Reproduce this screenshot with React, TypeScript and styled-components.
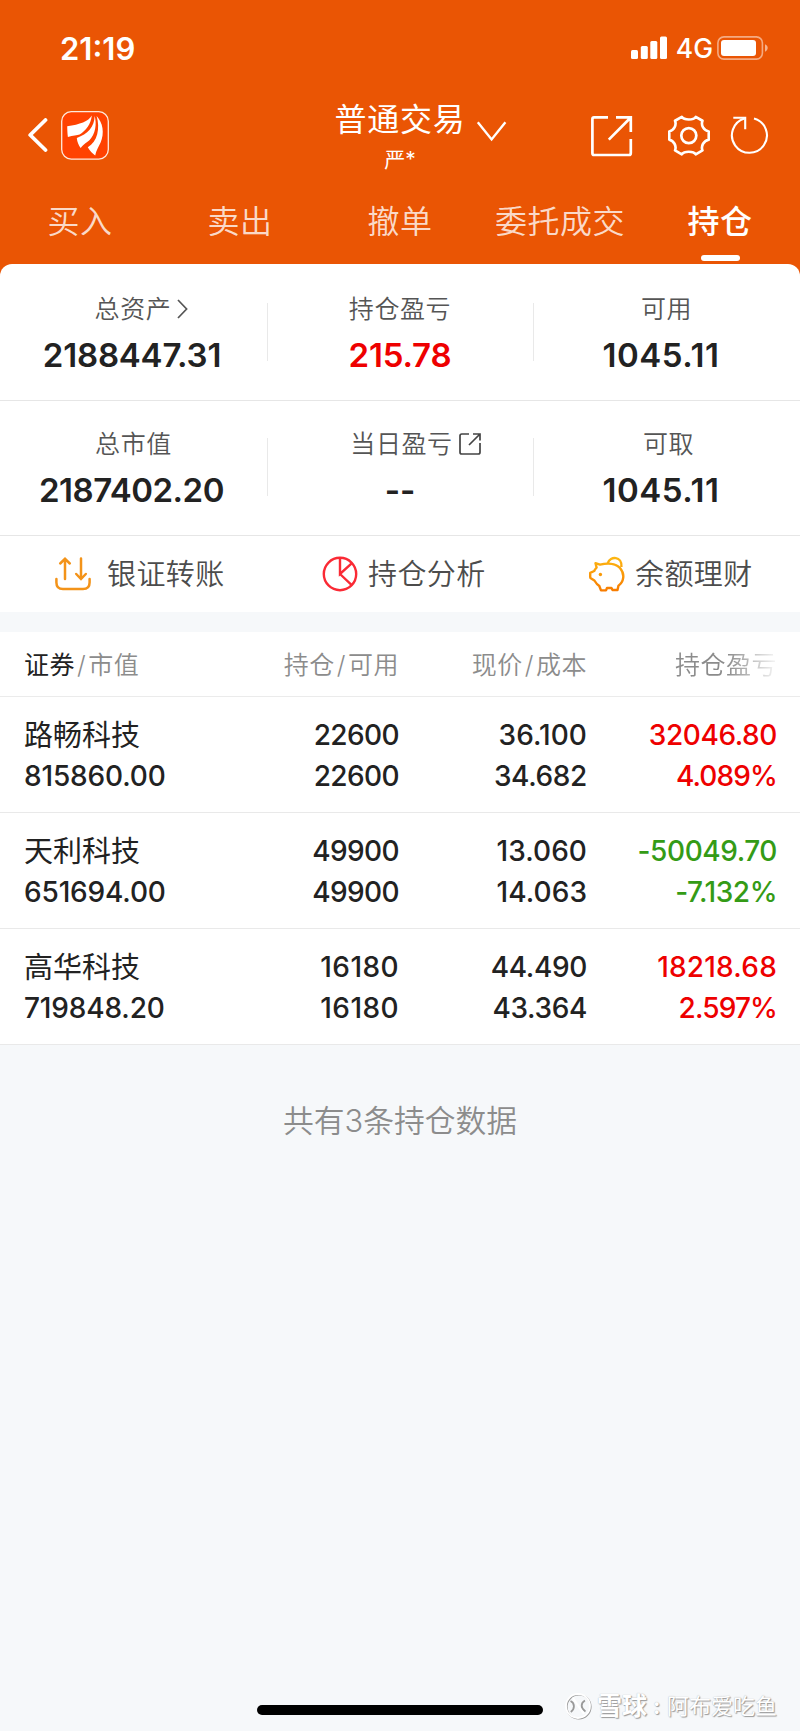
import React from "react";
import styled, { createGlobalStyle } from "styled-components";

const Global = createGlobalStyle`
  * { box-sizing: border-box; }
  body {
    margin: 0;
    background: #f6f8fa;
    font-family: Inter, "Noto Sans CJK SC", sans-serif;
    color: #222;
  }
`;

const Screen = styled.main`
  position: relative;
  width: 800px;
  height: 1731px;
  overflow: hidden;
  background: #f6f8fa;
`;

const Header = styled.header`
  height: 276px;
  background: #ea5504;
  color: #fff;
`;

const StatusBar = styled.div`
  display: flex;
  align-items: center;
  height: 96px;
  padding: 0 31px 0 60px;
`;

const Clock = styled.div`
  flex: 1;
  font-size: 31px;
  font-weight: 600;
  line-height: 40px;
  padding-top: 2px;
`;

const Network = styled.div`
  margin: 0 4px 0 8px;
  font-size: 26.5px;
  font-weight: 500;
  line-height: 40px;
`;

const NavBar = styled.div`
  display: grid;
  grid-template-columns: 300px 230px 270px;
  height: 84px;
`;

const NavLeft = styled.div`
  display: flex;
  align-items: center;
  gap: 13px;
  padding: 0 0 6px 28px;
`;

const NavTitle = styled.div`
  display: flex;
  padding-left: 34px;
`;

const TitleText = styled.div`
  width: 132px;
  text-align: center;
  white-space: nowrap;
  font-size: 32px;
  line-height: 40px;
  letter-spacing: 0.8px;
  padding-top: 4px;
`;

const Account = styled.div`
  font-size: 21px;
  line-height: 28px;
  letter-spacing: 0;
  padding-top: 6px;
`;

const NavRight = styled.div`
  display: flex;
  align-items: flex-start;
  padding: 19px 0 0 60px;
`;

const TitleChevron = styled.svg`
  flex: none;
  margin: 25px 0 0 10px;
`;

const Tabs = styled.nav`
  display: grid;
  grid-template-columns: repeat(5, 160px);
  height: 84px;
`;

const Tab = styled.div<{ $active?: boolean }>`
  display: flex;
  flex-direction: column;
  align-items: center;
  padding-top: 19px;
  font-size: 32px;
  line-height: 46px;
  letter-spacing: 0.5px;
  font-weight: ${(p) => (p.$active ? 500 : 350)};
  color: ${(p) => (p.$active ? "#fff" : "rgba(255,255,255,.8)")};

  &::after {
    content: "";
    display: ${(p) => (p.$active ? "block" : "none")};
    width: 39px;
    height: 6px;
    margin-top: 10px;
    border-radius: 3px;
    background: #fff;
  }
`;

const Summary = styled.section`
  margin-top: -12px;
  border-radius: 12px 12px 0 0;
  background: #fff;
`;

const SummaryRow = styled.div`
  display: grid;
  grid-template-columns: 267px 266px 267px;
  height: 135px;
  padding: 25px 0;
  border-bottom: 1px solid #e6e6e6;

  &:first-child {
    height: 137px;
    padding-top: 27px;
  }
`;

const Metric = styled.div`
  display: flex;
  flex-direction: column;
  align-items: center;
  height: 84px;
  padding-top: 1px;

  & + & {
    background: linear-gradient(#e9e9e9, #e9e9e9) 0 12px / 1px 58px no-repeat;
  }
`;

const MetricLabel = styled.div<{ $shift?: number }>`
  display: flex;
  align-items: center;
  gap: 6px;
  margin-left: ${(p) => p.$shift ?? 0}px;
  font-size: 25px;
  font-weight: 350;
  line-height: 34px;
  letter-spacing: 0.6px;
  color: #555;
`;

const MetricValue = styled.div<{ $color?: string; $shift?: number; $track?: number }>`
  margin: 9px 0 0 ${(p) => p.$shift ?? 0}px;
  font-size: 33px;
  font-weight: 600;
  line-height: 40px;
  letter-spacing: ${(p) => p.$track ?? 0}em;
  color: ${(p) => p.$color ?? "#222"};
`;

const Actions = styled.section`
  display: grid;
  grid-template-columns: 267px 267px 266px;
  height: 76px;
  background: #fff;
`;

const Action = styled.div<{ $gap: number }>`
  display: flex;
  align-items: center;
  gap: ${(p) => p.$gap}px;
  padding-left: 55px;
  font-size: 29px;
  font-weight: 350;
  line-height: 40px;
  letter-spacing: 0.4px;
  color: #4c4c4c;
  white-space: nowrap;

  span {
    padding-top: 2px;
  }
`;

const Table = styled.section`
  margin-top: 20px;
  background: #fff;
`;

const HeadRow = styled.div`
  display: grid;
  grid-template-columns: 200px 175px 188px 190px;
  height: 65px;
  padding: 0 23px 0 24px;
  border-bottom: 1px solid #ebebeb;
  font-size: 25px;
  font-weight: 350;
  line-height: 66px;
  letter-spacing: 0.5px;
  color: #8c8c8c;
`;

const HeadCell = styled.div<{ $right?: boolean; $fade?: boolean }>`
  height: 64px;
  text-align: ${(p) => (p.$right ? "right" : "left")};
  ${(p) =>
    p.$fade &&
    "mask-image: linear-gradient(90deg, #000 140px, transparent 194px);"}

  b {
    font-weight: 400;
    color: #222;
  }
  i {
    font-style: normal;
    margin: 0 2px;
  }
`;

const Row = styled.div`
  display: grid;
  grid-template-columns: 200px 175px 188px 190px;
  height: 116px;
  padding: 18px 23px 0 24px;
  border-bottom: 1px solid #e9e9e9;
`;

const Cell = styled.div<{ $right?: boolean; $color?: string }>`
  text-align: ${(p) => (p.$right ? "right" : "left")};
  color: ${(p) => p.$color ?? "#222"};
  white-space: nowrap;
`;

const Figure = styled.div<{ $track: number }>`
  font-size: 28px;
  font-weight: 500;
  line-height: 40.5px;
  letter-spacing: ${(p) => p.$track}em;
`;

const Name = styled.div`
  height: 40.5px;
  padding-top: 1px;
  font-size: 29px;
  font-weight: 400;
  line-height: 40px;
`;

const Footnote = styled.p`
  margin: 56px 0 0;
  text-align: center;
  font-size: 30.8px;
  font-weight: 350;
  line-height: 40px;
  color: #8c8c8c;
`;

const HomeIndicator = styled.div`
  position: absolute;
  left: 257px;
  bottom: 16px;
  width: 286px;
  height: 10px;
  border-radius: 5px;
  background: #000;
`;

const Watermark = styled.div`
  position: absolute;
  right: 23px;
  bottom: 8px;
  display: flex;
  align-items: center;
  font-size: 22px;
  line-height: 34px;
  color: #fff;
  text-shadow: 1px 1px 1px #999, 0 0 1px #aaa;
  white-space: nowrap;

  strong {
    margin: 0 3px 0 5px;
    font-size: 25px;
    font-weight: 700;
  }
  em {
    font-style: normal;
    font-weight: 700;
    width: 17px;
    padding-left: 3px;
  }
`;

const RED = "#ee0000";
const GREEN = "#349b16";

/* Average tracking for a figure: narrow glyphs (1 and the point) get more room. */
const tracking = (text: string, base: number) => {
  const ones = text.split("1").length - 1;
  const points = text.split(".").length - 1;
  const percents = text.split("%").length - 1;
  const extra = ones * 0.09 + points * 0.05 - percents * 0.11;
  return base + extra / text.length;
};

const Signal = () => (
  <svg width="37" height="24" viewBox="0 0 37 24" fill="#fff">
    <rect x="0" y="14" width="7" height="9" rx="1.5" />
    <rect x="9.8" y="10" width="7" height="13" rx="1.5" />
    <rect x="19.3" y="5" width="7" height="18" rx="1.5" />
    <rect x="29" y="0.5" width="7" height="22.5" rx="1.5" />
  </svg>
);

const Battery = () => (
  <svg width="52" height="24" viewBox="0 0 52 24">
    <rect x="0.9" y="0.9" width="44.5" height="22.2" rx="6" fill="none" stroke="#fff" strokeOpacity=".5" strokeWidth="1.6" />
    <rect x="4" y="4" width="35" height="16" rx="3" fill="#fff" />
    <path d="M48 8.3c3.6 1.4 3.6 6 0 7.4z" fill="#fff" fillOpacity=".55" />
  </svg>
);

const BackIcon = () => (
  <svg width="20" height="34" viewBox="0 0 20 34" fill="none" stroke="#fff" strokeWidth="3.8" strokeLinecap="round" strokeLinejoin="round">
    <path d="M17.5 2L2.2 17L17.5 32" />
  </svg>
);

const BrandIcon = () => (
  <svg width="48" height="49" viewBox="0 0 48 49">
    <rect x="0.7" y="0.7" width="46.6" height="47.4" rx="9.5" fill="#ff4200" stroke="#ffe9dd" strokeWidth="1.3" />
    <g fill="#fff">
      <path d="M30.8 4.6C27.5 10.5 19 13.6 6.2 15.3C6.3 19 6.4 23 6.9 26C12 24.8 16.2 24.2 18.6 23.6C25 19.8 30 13 30.8 4.6Z" />
      <path d="M33.6 5C33.5 16 26.5 23 15.8 27C16.2 31 17.7 34.4 19.7 37C23 32.5 26 31.3 28.4 29.2C34.5 23 36 13 33.6 5Z" />
      <path d="M35.6 5C39.3 17.5 36.5 30.5 26.8 36.3C28.8 39.8 31.4 42.6 34.2 44.4C35 39.5 37.8 35.6 39.6 31.5C43.6 22.3 42 11.6 35.6 5Z" />
    </g>
  </svg>
);

const ShareIcon = () => (
  <svg width="43" height="43" viewBox="0 0 43 43" fill="none" stroke="#fff" strokeWidth="2.7">
    <path d="M18 2.4H4Q2.4 2.4 2.4 4V38Q2.4 40 4 40H39Q40.8 40 40.8 38V24" />
    <path d="M26 2.4H40.8V17M40 3.2L18.8 24.6" />
  </svg>
);

const NavGear = styled.svg`
  margin: -1px 20px 0 35px;
`;

const GearIcon = () => (
  <NavGear width="42" height="43" viewBox="0.5 0 43 43" fill="none" stroke="#fff" strokeWidth="2.7" strokeLinejoin="round">
    <path d="M14.6 2.4C17 6 26.6 6 28.9 2.4L35.8 6.4C34 11 37 16.4 42.2 17.4V25.8C37 26.8 34 32.2 35.8 36.8L28.9 40.8C26.6 37.2 17 37.2 14.6 40.8L7.7 36.8C9.5 32.2 6.5 26.8 1.8 25.8V17.4C6.5 16.4 9.5 11 7.7 6.4Z" />
    <circle cx="21.8" cy="21.6" r="7.7" strokeWidth="2.8" />
  </NavGear>
);

const RefreshIcon = () => (
  <svg width="39" height="40" viewBox="0 0 39 40" fill="none" stroke="#fff" strokeWidth="2.1">
    <path d="M24 3.4A17.5 17.5 0 1 1 14.5 3.5" />
    <path d="M3.3 2.8H15.2V14.3" />
  </svg>
);

const LinkIcon = () => (
  <svg width="22" height="22" viewBox="0 0 22 22" fill="none" stroke="#444" strokeWidth="1.7">
    <path d="M10 1H2.8Q1 1 1 2.8V19.2Q1 21 2.8 21H19.2Q21 21 21 19.2V10" />
    <path d="M14 1H21V7.5M21 1L10 12" />
  </svg>
);

const ArrowIcon = () => (
  <svg width="11" height="20" viewBox="0 0 11 20" fill="none" stroke="#555" strokeWidth="1.7">
    <path d="M1 1L9.6 10L1 19" />
  </svg>
);

const TransferIcon = () => (
  <svg width="36" height="34" viewBox="0 0 36 34" fill="none" stroke="#f39319" strokeWidth="2.5" strokeLinecap="round">
    <path d="M1.4 22V25.5Q1.4 32 8 32H28Q34.6 32 34.6 25.5V22" />
    <path d="M10 22V2M5.2 6.5L10 1.8L14.8 6.5M26 1.5V21.5M21.2 17L26 22L30.8 17" />
  </svg>
);

const PieIcon = () => (
  <svg width="36" height="36" viewBox="0 0 36 36" fill="none" stroke="#fa2a35" strokeWidth="2.4">
    <circle cx="18" cy="18" r="16.2" />
    <path d="M18 1.8V18L30.2 6.8M18 18L30 29.3" />
  </svg>
);

const PiggyIcon = () => (
  <svg width="36" height="36" viewBox="0 0 36 36" fill="none" stroke="url(#pig)" strokeWidth="2.4" strokeLinejoin="round">
    <defs>
      <linearGradient id="pig" x1="0" y1="0" x2="0" y2="36" gradientUnits="userSpaceOnUse">
        <stop stopColor="#fdb913" />
        <stop offset="1" stopColor="#f77a00" />
      </linearGradient>
    </defs>
    <path d="M6.5 7.2L11 8.6C18 6.8 26.5 7.2 31 12C36.5 18.5 34.5 26 29.5 29.6L28.5 34H23.5L22.5 32H18L17 34.4H12L10.2 29.8C8 28.8 6.6 26.5 5.4 24.5L1.8 22.3Q1.2 22 1.2 21V16.8L5.2 15C5.8 13.5 7 12.2 7.6 11.5Z" />
    <path d="M18.8 7.2C21 -.5 33.5 .2 32.4 11" />
    <circle cx="11.4" cy="18.5" r="1.7" fill="#f99a08" stroke="none" />
  </svg>
);

const SnowballIcon = () => (
  <svg width="28" height="28" viewBox="0 0 28 28" fill="none">
    <circle cx="14.8" cy="14.8" r="12" stroke="#999" strokeWidth="1.6" />
    <circle cx="14" cy="14" r="12" stroke="#fff" strokeWidth="1.8" />
    <path d="M6.5 9C11 11 11 17 6.8 20M21 8.5C16.5 11 16.5 16.5 21.5 19.5" stroke="#999" strokeWidth="1.8" />
    <path d="M9 5.5C11.5 11 16.5 16.5 20 22" stroke="#fff" strokeWidth="2" />
  </svg>
);

const holdings = [
  { name: "路畅科技", value: "815860.00", held: "22600", usable: "22600", price: "36.100", cost: "34.682", gain: "32046.80", pct: "4.089%" },
  { name: "天利科技", value: "651694.00", held: "49900", usable: "49900", price: "13.060", cost: "14.063", gain: "-50049.70", pct: "-7.132%" },
  { name: "高华科技", value: "719848.20", held: "16180", usable: "16180", price: "44.490", cost: "43.364", gain: "18218.68", pct: "2.597%" },
];

const Num = ({ text }: { text: string }) => (
  <Figure $track={tracking(text, -0.021)}>{text}</Figure>
);

const Total = ({ text, color, shift }: { text: string; color?: string; shift?: number }) => (
  <MetricValue $color={color} $shift={shift} $track={tracking(text, -0.029)}>
    {text}
  </MetricValue>
);

export default function App() {
  return (
    <Screen>
      <Global />
      <Header>
        <StatusBar>
          <Clock>21:19</Clock>
          <Signal />
          <Network>4G</Network>
          <Battery />
        </StatusBar>
        <NavBar>
          <NavLeft>
            <BackIcon />
            <BrandIcon />
          </NavLeft>
          <NavTitle>
            <TitleText>
              普通交易
              <Account>严*</Account>
            </TitleText>
            <TitleChevron width="32" height="21" viewBox="0 0 32 21" fill="none" stroke="#fff" strokeWidth="2.4">
              <path d="M1.8 1.2L15.6 18.4L29.4 1.2" />
            </TitleChevron>
          </NavTitle>
          <NavRight>
            <ShareIcon />
            <GearIcon />
            <RefreshIcon />
          </NavRight>
        </NavBar>
        <Tabs>
          <Tab>买入</Tab>
          <Tab>卖出</Tab>
          <Tab>撤单</Tab>
          <Tab>委托成交</Tab>
          <Tab $active>持仓</Tab>
        </Tabs>
      </Header>

      <Summary>
        <SummaryRow>
          <Metric>
            <MetricLabel $shift={16}>总资产<ArrowIcon /></MetricLabel>
            <Total text="2188447.31" shift={-3} />
          </Metric>
          <Metric>
            <MetricLabel>持仓盈亏</MetricLabel>
            <Total text="215.78" color={RED} />
          </Metric>
          <Metric>
            <MetricLabel>可用</MetricLabel>
            <Total text="1045.11" shift={-11} />
          </Metric>
        </SummaryRow>
        <SummaryRow>
          <Metric>
            <MetricLabel>总市值</MetricLabel>
            <Total text="2187402.20" shift={-4} />
          </Metric>
          <Metric>
            <MetricLabel $shift={31}>当日盈亏<LinkIcon /></MetricLabel>
            <MetricValue>--</MetricValue>
          </Metric>
          <Metric>
            <MetricLabel $shift={4}>可取</MetricLabel>
            <Total text="1045.11" shift={-11} />
          </Metric>
        </SummaryRow>
      </Summary>

      <Actions>
        <Action $gap={16}><TransferIcon /><span>银证转账</span></Action>
        <Action $gap={10}><PieIcon /><span>持仓分析</span></Action>
        <Action $gap={10}><PiggyIcon /><span>余额理财</span></Action>
      </Actions>

      <Table>
        <HeadRow>
          <HeadCell><b>证券</b><i>/</i>市值</HeadCell>
          <HeadCell $right>持仓<i>/</i>可用</HeadCell>
          <HeadCell $right>现价<i>/</i>成本</HeadCell>
          <HeadCell $right $fade>持仓盈亏</HeadCell>
        </HeadRow>
        {holdings.map((h) => (
          <Row key={h.name}>
            <Cell><Name>{h.name}</Name><Num text={h.value} /></Cell>
            <Cell $right><Num text={h.held} /><Num text={h.usable} /></Cell>
            <Cell $right><Num text={h.price} /><Num text={h.cost} /></Cell>
            <Cell $right $color={h.gain.startsWith("-") ? GREEN : RED}>
              <Num text={h.gain} />
              <Num text={h.pct} />
            </Cell>
          </Row>
        ))}
      </Table>

      <Footnote>共有3条持仓数据</Footnote>
      <HomeIndicator />
      <Watermark>
        <SnowballIcon />
        <strong>雪球</strong>
        <em>:</em>
        阿布爱吃鱼
      </Watermark>
    </Screen>
  );
}
